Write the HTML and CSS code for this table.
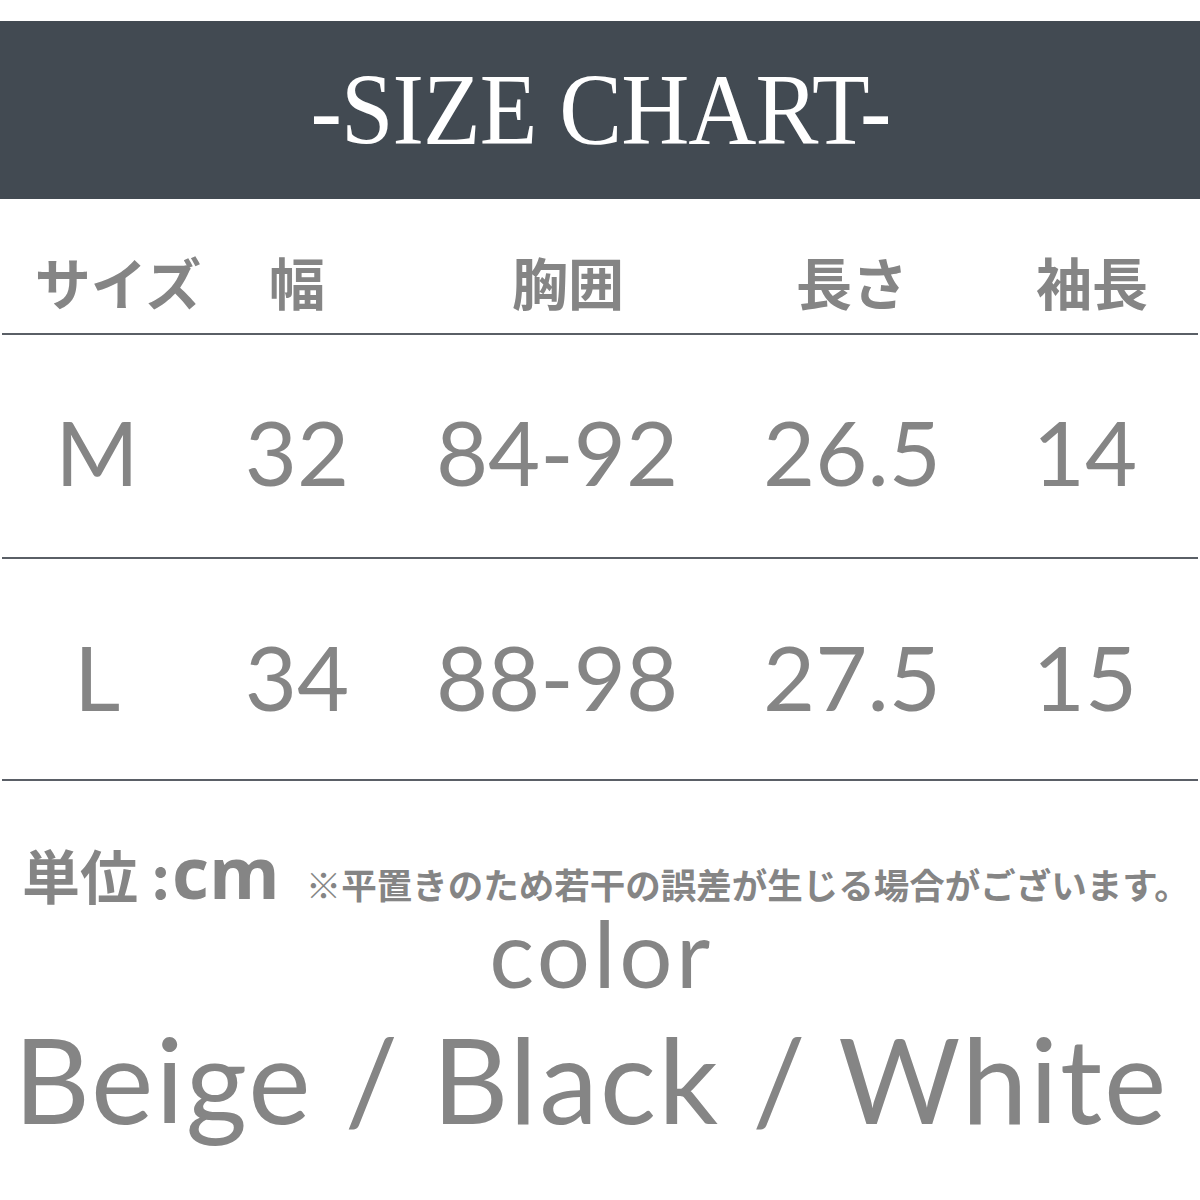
FILE: index.html
```html
<!DOCTYPE html>
<html lang="ja">
<head>
<meta charset="utf-8">
<link rel="stylesheet" href="styles.css">
</head>
<body>
<div class="page">
  <header class="banner"><span class="title">-SIZE CHART-</span></header>
  <div class="row head">
    <div class="c c1 h1">サイズ</div>
    <div class="c c2">幅</div>
    <div class="c c3 h3">胸囲</div>
    <div class="c c4">長さ</div>
    <div class="c c5 h5">袖長</div>
  </div>
  <div class="row data r1">
    <div class="c c1 m">M</div>
    <div class="c c2">32</div>
    <div class="c c3">84-92</div>
    <div class="c c4">26.5</div>
    <div class="c c5">14</div>
  </div>
  <div class="row data r2">
    <div class="c c1 m">L</div>
    <div class="c c2">34</div>
    <div class="c c3">88-98</div>
    <div class="c c4">27.5</div>
    <div class="c c5">15</div>
  </div>
  <div class="unit">
    <span class="unit-label">単位 : </span><span class="unit-cm">cm</span>
    <span class="note">※平置きのため若干の誤差が生じる場合がございます。</span>
  </div>
  <div class="color-label">color</div>
  <div class="colors">Beige / Black / White</div>
</div>
</body>
</html>
```
FILE: styles.css
```css
html, body { margin: 0; padding: 0; background: #fff; }
.page { width: 1200px; height: 1200px; padding-top: 21px; box-sizing: border-box; color: #858585; font-family: Lato, "Noto Sans CJK JP", sans-serif; overflow: hidden; }
.banner { height: 178px; background: #424a52; display: flex; align-items: center; justify-content: center; }
.title { display: inline-block; font-family: "Liberation Serif", "DejaVu Serif", serif; color: #fff; font-size: 102px; line-height: 1; transform: scaleX(0.925); letter-spacing: -1px; white-space: nowrap; margin-top: 0; }
.row { display: grid; grid-template-columns: 210px 170px 350px 240px 226px; margin: 0 2px; border-bottom: 2px solid #5a5f66; align-items: center; }
.c { text-align: center; white-space: nowrap; }
.head { height: 134px; font-family: "Noto Sans CJK JP", sans-serif; font-weight: 700; font-size: 56px; line-height: 1; }
.head .c { padding-top: 30px; }
.h1 { padding-left: 22px; }
.h3 { padding-left: 22px; }
.h5 { padding-left: 14px; }
.data { height: 222px; font-size: 90px; line-height: 1; font-weight: 400; }
.r1 .c { padding-top: 10px; }
.r2 { height: 220px; }
.r2 .c { padding-top: 14px; }
.m { padding-right: 20px; }
.unit { display: flex; align-items: baseline; padding-left: 22px; margin-top: 62px; height: 56px; line-height: 56px; white-space: nowrap; overflow: visible; }
.unit-label { font-family: "Noto Sans CJK JP", sans-serif; font-weight: 700; font-size: 58px; line-height: 56px; }
.unit-cm { font-family: "Open Sans", "Noto Sans", sans-serif; font-weight: 700; font-size: 72px; line-height: 56px; margin-left: 2px; }
.note { font-family: "Noto Sans CJK JP", sans-serif; font-weight: 700; font-size: 35.5px; line-height: 40px; margin-left: 26px; }
.color-label { text-align: center; font-size: 94px; line-height: 1; letter-spacing: 3.5px; padding-left: 3px; margin-top: 6px; }
.colors { text-align: center; font-size: 118px; line-height: 1; margin-top: 21px; letter-spacing: 2px; padding-right: 18px; white-space: nowrap; }
```
